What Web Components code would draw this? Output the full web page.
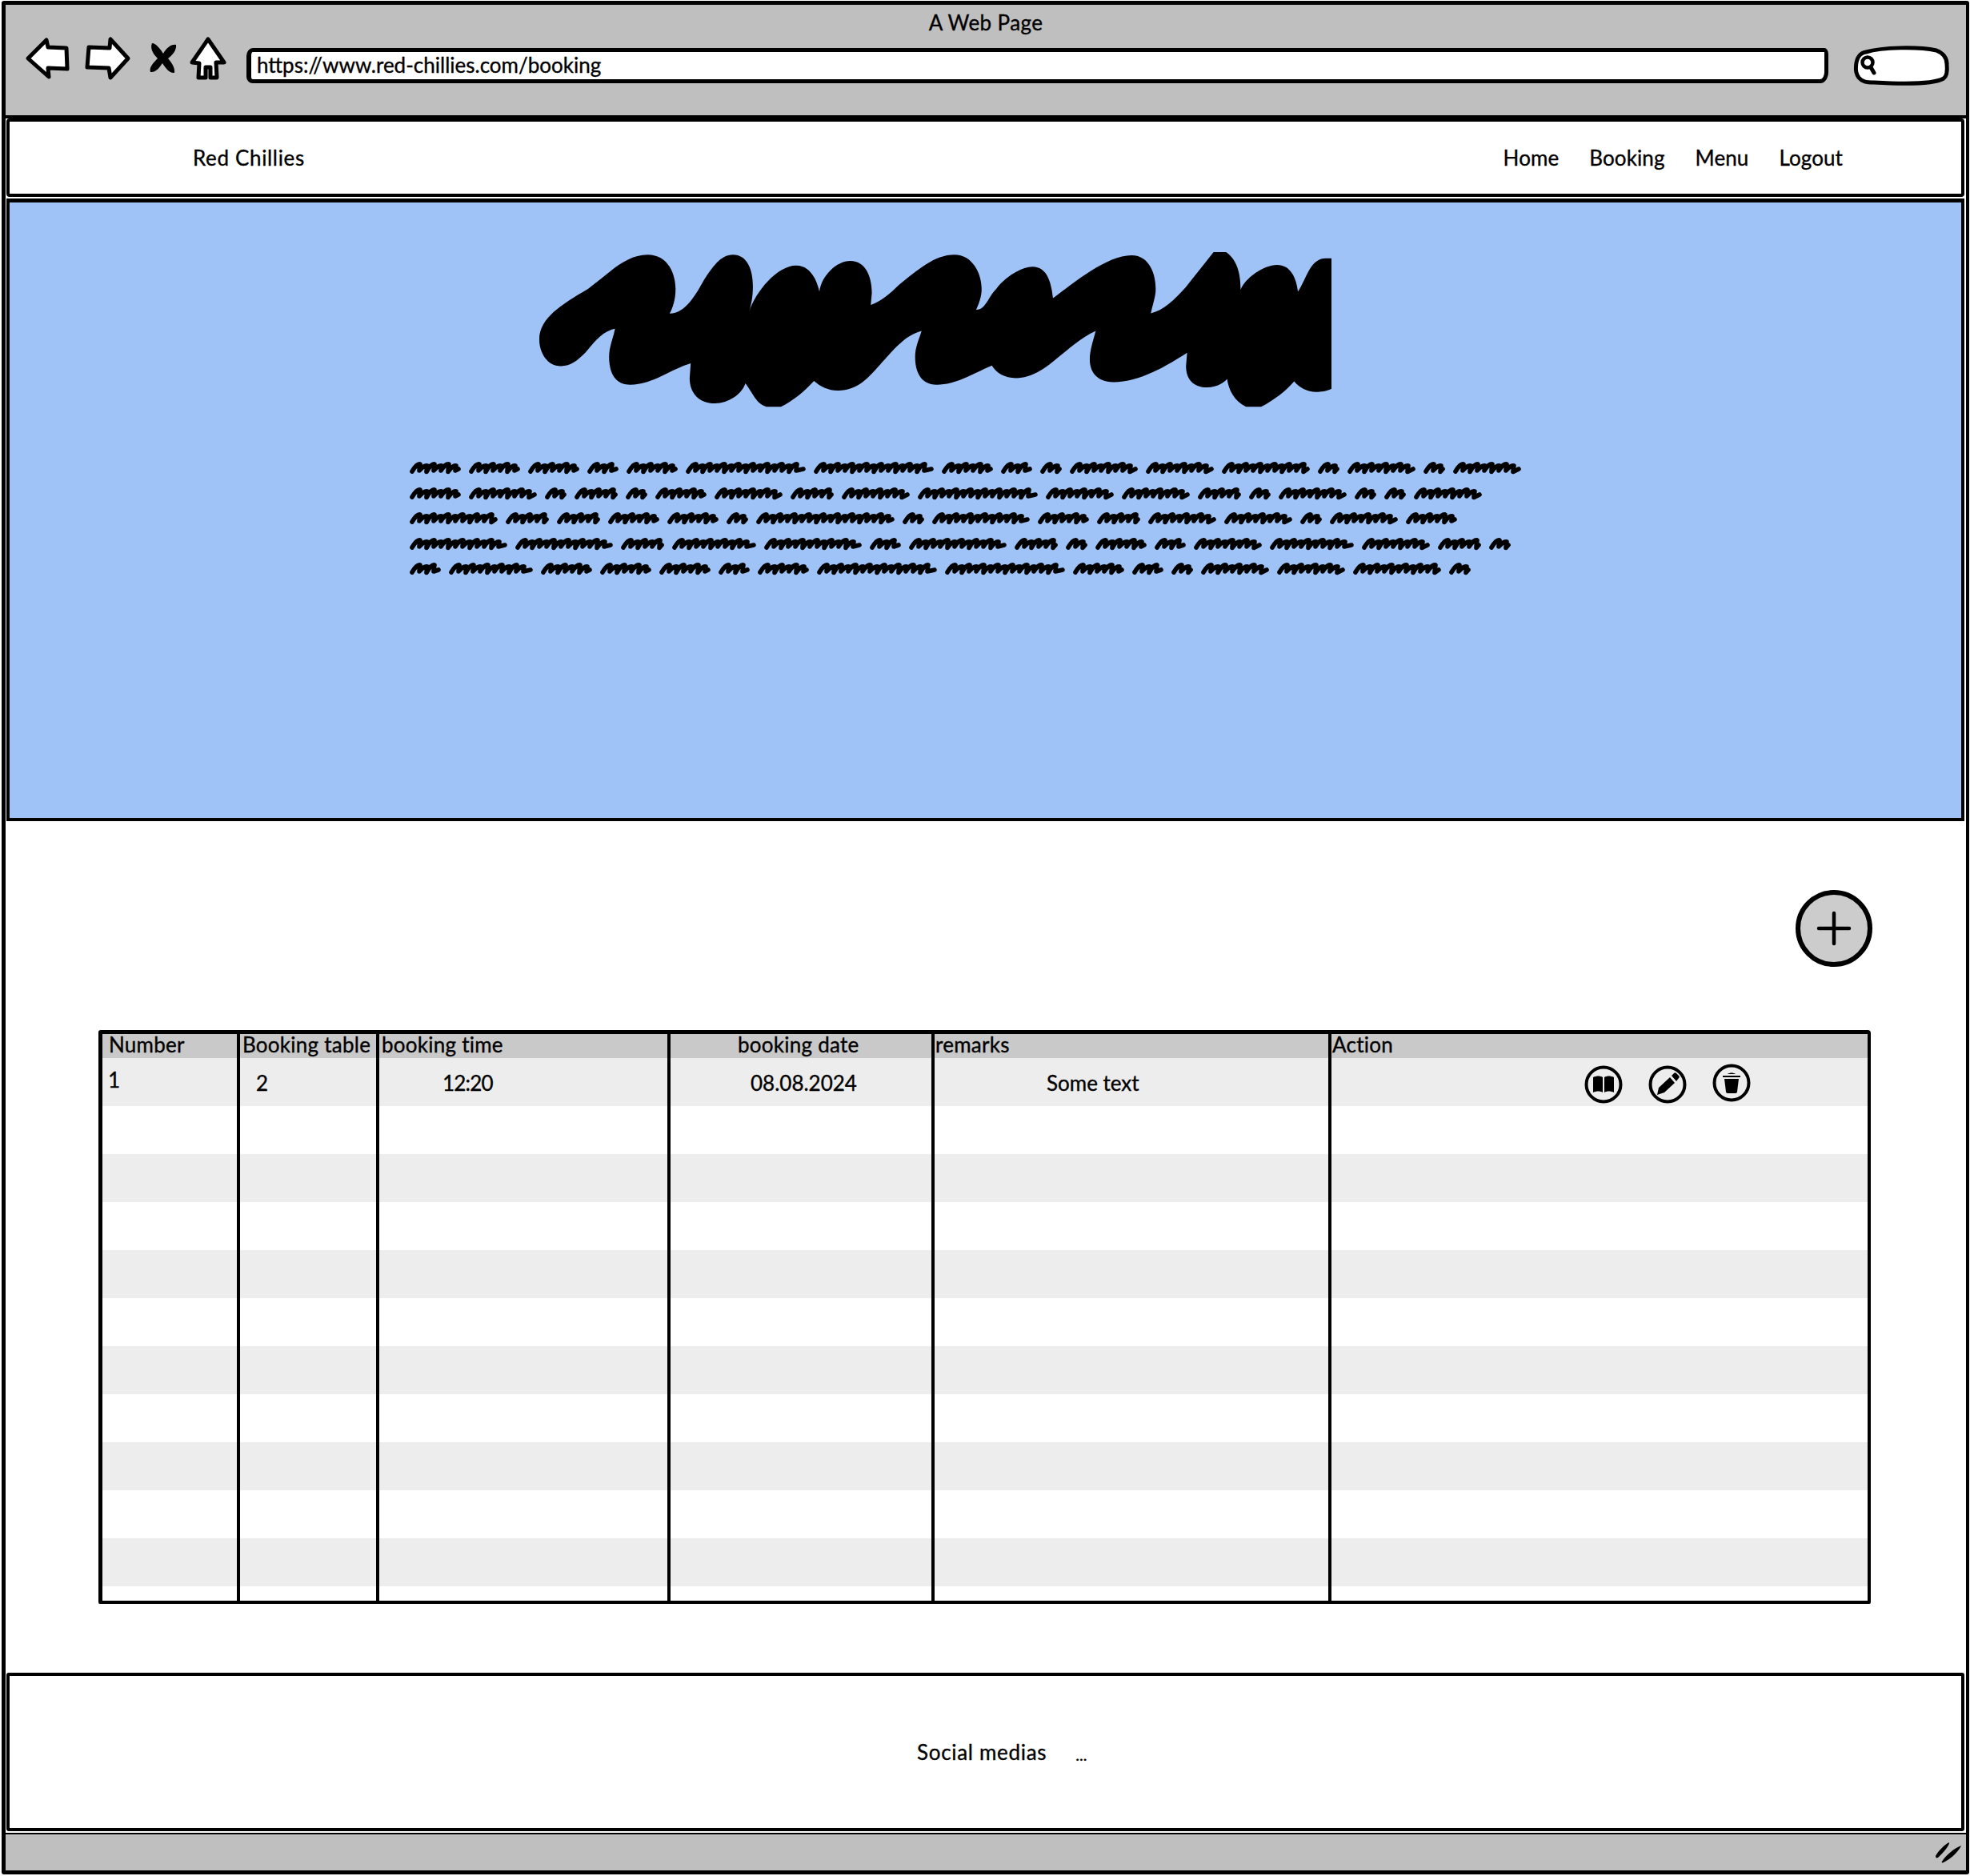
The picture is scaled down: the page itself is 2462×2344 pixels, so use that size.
<!DOCTYPE html>
<html lang="en">
<head>
    <meta charset="UTF-8">
    <title>Red Chillies booking wireframe</title>
    <style>
        html, body { margin: 0; background: #fff; }
        body { font-family: Lato, "Open Sans", sans-serif; color: #000; -webkit-text-stroke: 0.35px #000; }
    </style>
</head>
<body>
    <browser-window>
        <browser-bar title="A Web Page" url="https://www.red-chillies.com/booking"></browser-bar>
        <site-nav brand="Red Chillies">
            <span>Home</span>
            <span>Booking</span>
            <span>Menu</span>
            <span>Logout</span>
        </site-nav>
        <hero-banner>
            <scribble-line widths="64 64 64 39 64 150 150 64 39 27 85 85 110 27 85 27 85"></scribble-line>
            <scribble-line widths="64 85 27 54 27 64 85 54 85 150 85 85 54 27 85 27 27 85"></scribble-line>
            <scribble-line widths="110 54 54 64 64 27 173 27 122 64 54 85 85 27 85 64"></scribble-line>
            <scribble-line widths="122 122 54 105 122 39 122 54 27 64 39 85 105 85 54 27"></scribble-line>
            <scribble-line widths="39 105 64 64 64 39 64 150 150 64 39 27 85 85 110 27"></scribble-line>
        </hero-banner>
        <page-content>
            <add-button></add-button>
            <booking-table>
                <sketch-icon slot="actions" name="book"></sketch-icon>
                <sketch-icon slot="actions" name="pencil"></sketch-icon>
                <sketch-icon slot="actions" name="trash"></sketch-icon>
            </booking-table>
        </page-content>
        <page-footer></page-footer>
        <status-bar></status-bar>
    </browser-window>

    <script>
        // Browser chrome around the whole page
        class BrowserWindow extends HTMLElement {
            constructor() {
                super();
                this.attachShadow({ mode: 'open' });
                this.shadowRoot.innerHTML = `
                    <style>
                        :host {
                            display: flex;
                            flex-direction: column;
                            box-sizing: border-box;
                            width: 2459px;
                            height: 2341px;
                            margin: 1px 0 0 2px;
                            border: 5px solid #000;
                            border-right-width: 4px;
                            border-radius: 3px;
                            background: #fff;
                        }
                    </style>
                    <slot></slot>
                `;
            }
        }

        class BrowserBar extends HTMLElement {
            constructor() {
                super();
                this.attachShadow({ mode: 'open' });
                this.shadowRoot.innerHTML = `
                    <style>
                        :host {
                            display: block;
                            box-sizing: border-box;
                            height: 142px;
                            padding-top: 2px;
                            background: #bfbfbf;
                            border-bottom: 4px solid #000;
                        }
                        .title { height: 40px; line-height: 40px; text-align: center; font-size: 26px; letter-spacing: 0.4px; }
                        .tools { display: flex; align-items: center; height: 50px; padding-left: 25px; }
                        svg { display: block; flex: none; overflow: visible; }
                        .url {
                            box-sizing: border-box;
                            width: 1977px;
                            height: 44px;
                            margin: 18px 0 0 25px;
                            padding-left: 7px;
                            line-height: 33px;
                            font-size: 26px;
                            background: #fff;
                            border: 5px solid #000;
                            border-left-width: 6px;
                            border-radius: 8px 5px 10px 8px / 10px 8px 14px 8px;
                        }
                        .search { position: relative; width: 118px; height: 48px; margin: 18px 0 0 32px; }
                    </style>
                    <div class="title"></div>
                    <div class="tools">
                        <svg width="55" height="52" viewBox="0 0 55 52" style="margin-top:-1px"><path d="M3 26 26 3l2 9 23 1 1 26-24-1 1 11Z" fill="#fff" stroke="#000" stroke-width="5" stroke-linejoin="round"/></svg>
                        <svg width="57" height="54" viewBox="0 0 57 54" style="margin-left:19px"><path d="M54 27 32 3l-1 11-26-1-2 25 27 1 2 12Z" fill="#fff" stroke="#000" stroke-width="5" stroke-linejoin="round"/></svg>
                        <svg width="33" height="38" viewBox="0 0 33 38" style="margin-left:24px"><path d="M3 0C8 0 14 8 17 13 21 6 27 1 33 2 34 9 28 15 23 19 28 25 32 31 31 37 25 38 20 31 16 25 12 31 7 37 1 36-1 30 5 24 10 19 5 14 0 7 3 0Z"/></svg>
                        <svg width="46" height="54" viewBox="0 0 46 54" style="margin-left:17px"><path d="M23 3 43 32H33L34 51H26V38H20V51H11L12 33 3 32Z" fill="#fff" stroke="#000" stroke-width="5" stroke-linejoin="round"/></svg>
                        <div class="url"></div>
                        <div class="search">
                            <svg width="118" height="48" viewBox="0 0 118 48">
                                <path d="M2.5 25C3 14 8 8 15 7C35 1 80 0 103 5C113 9 116 15 116 22C117 32 115 38 112 40C100 47 60 47 25 45C15 45 10 44 6 39C3 35 2 30 2.5 25Z" fill="#fff" stroke="#000" stroke-width="5"/>
                                <circle cx="17" cy="20" r="6.5" fill="none" stroke="#000" stroke-width="4.5"/>
                                <path d="M21 26 25 33" stroke="#000" stroke-width="5" stroke-linecap="round"/>
                            </svg>
                        </div>
                    </div>
                `;
            }

            connectedCallback() {
                this.shadowRoot.querySelector('.title').textContent = this.getAttribute('title');
                this.shadowRoot.querySelector('.url').textContent = this.getAttribute('url');
            }
        }

        class SiteNav extends HTMLElement {
            constructor() {
                super();
                this.attachShadow({ mode: 'open' });
                this.shadowRoot.innerHTML = `
                    <style>
                        :host {
                            display: flex;
                            align-items: center;
                            box-sizing: border-box;
                            height: 98px;
                            margin: 0 2px 0 1px;
                            padding: 0 148px 0 229px;
                            border: 4px solid #000;
                            border-radius: 4px;
                            background: #fff;
                            font-size: 26px;
                        }
                        .brand { flex: 1; letter-spacing: 0.65px; }
                        nav { display: flex; gap: 38px; letter-spacing: 0.1px; }
                    </style>
                    <div class="brand"></div>
                    <nav><slot></slot></nav>
                `;
            }

            connectedCallback() {
                this.shadowRoot.querySelector('.brand').textContent = this.getAttribute('brand');
            }
        }

        class HeroBanner extends HTMLElement {
            constructor() {
                super();
                this.attachShadow({ mode: 'open' });
                this.shadowRoot.innerHTML = `
                    <style>
                        :host {
                            display: block;
                            box-sizing: border-box;
                            height: 778px;
                            margin: 2px 2px 0 1px;
                            padding-top: 62px;
                            border: 4px solid #000;
                            border-top-width: 5px;
                            background: #9fc3f7;
                        }
                        svg { display: block; margin-left: 662px; }
                        .lines { display: flex; flex-direction: column; gap: 15.6px; margin: 68px 0 0 500px; }
                    </style>
                    <svg width="990" height="194" viewBox="50 72 1465 583" preserveAspectRatio="none">
                        <path d="M50 400C50 320 90 270 140 210C180 150 210 82 250 82C290 82 302 160 302 210C302 250 297 280 291 303C320 303 340 230 355 175C370 130 385 82 408 82C435 82 445 140 445 200C445 240 442 270 438 295C450 220 490 122 525 122C550 122 562 170 568 220C572 160 600 105 625 105C655 105 665 170 665 225L663 270C680 260 700 225 715 195C750 140 780 82 818 82C850 82 868 150 868 210C868 240 863 265 858 288C875 290 880 240 895 210C910 170 940 127 962 127C990 127 997 190 1000 245C1040 185 1100 84 1145 84C1180 84 1190 160 1190 210C1190 240 1184 270 1181 302C1205 290 1225 250 1245 205L1297 72L1320 72C1340 100 1347 150 1347 213C1355 170 1390 120 1414 120C1440 120 1450 170 1453 220C1470 170 1475 95 1505 95L1515 95L1515 585C1505 595 1495 597 1487 597C1470 597 1455 580 1446 557C1430 595 1410 625 1385 653L1357 653C1335 630 1325 590 1322 548C1315 565 1300 580 1285 580C1260 580 1246 550 1246 500L1248 450C1210 500 1160 560 1112 560C1080 560 1068 520 1068 475C1068 440 1075 400 1079 368C1050 395 1030 435 1005 475C985 510 960 545 932 545C910 545 895 525 887 498C850 530 820 570 785 570C755 570 745 520 745 465C745 430 752 400 757 368C725 385 705 440 680 495C660 540 640 592 602 592C585 592 570 578 558 556C540 595 520 630 497 653L470 653C450 640 445 600 431 565C425 605 400 640 375 640C345 640 328 600 328 545L330 490C295 510 260 570 218 570C190 570 179 525 179 465C179 425 187 395 190 360C165 370 150 415 135 450C120 480 108 500 90 500C65 500 50 450 50 400Z"/>
                    </svg>
                    <div class="lines"><slot></slot></div>
                `;
            }
        }

        // One row of squiggled-out text, word widths come from the attribute
        class ScribbleLine extends HTMLElement {
            constructor() {
                super();
                this.attachShadow({ mode: 'open' });
            }

            connectedCallback() {
                const words = this.getAttribute('widths').split(' ').map(Number);
                const svgs = words.map((w) => {
                    // slanted loops, a bit deeper in the middle of the word
                    let d = 'M3 12';
                    let i = 0;
                    for (let x = 3; x < w - 14; x += 9) {
                        const top = i % 2 ? 5 : 3;
                        const low = i % 3 === 1 ? 12.5 : 11;
                        d += ` Q${x + 6} ${top - 1} ${x + 10} ${top} Q${x + 9} ${low - 3} ${x + 9} ${low}`;
                        i++;
                    }
                    return `<svg width="${w}" height="16" viewBox="0 0 ${w} 16"><path d="${d} L${w - 3} 9" fill="none" stroke="#000" stroke-width="5.6" stroke-linecap="round" stroke-linejoin="round"/></svg>`;
                });
                this.shadowRoot.innerHTML = `
                    <style>
                        :host { display: flex; gap: 10px; height: 16px; }
                        svg { display: block; flex: none; }
                    </style>
                    ${svgs.join('')}
                `;
            }
        }

        class PageContent extends HTMLElement {
            constructor() {
                super();
                this.attachShadow({ mode: 'open' });
                this.shadowRoot.innerHTML = `
                    <style>
                        :host {
                            display: flex;
                            flex-direction: column;
                            gap: 79px;
                            padding: 86px 117px 86px 116px;
                        }
                    </style>
                    <slot></slot>
                `;
            }
        }

        class AddButton extends HTMLElement {
            constructor() {
                super();
                this.attachShadow({ mode: 'open' });
                this.shadowRoot.innerHTML = `
                    <style>
                        :host { display: block; align-self: flex-end; width: 96px; height: 96px; }
                        svg { display: block; }
                    </style>
                    <svg width="96" height="96" viewBox="0 0 96 96">
                        <circle cx="48" cy="48" r="45" fill="#ccc" stroke="#000" stroke-width="6"/>
                        <path d="M48 29V67M29 48H67" stroke="#000" stroke-width="4.5" stroke-linecap="round"/>
                    </svg>
                `;
            }
        }

        class SketchIcon extends HTMLElement {
            constructor() {
                super();
                this.attachShadow({ mode: 'open' });
            }

            connectedCallback() {
                const glyphs = {
                    book: '<path d="M11 15C15 13 20 13 23 15V34C20 32 15 32 11 34ZM25 15C28 13 33 13 37 15V34C33 32 28 32 25 34Z"/>',
                    pencil: '<path d="M11 37 13 28 27 15 33 22 20 34ZM29 13 32 10C33 9 34 9 35 10L38 13C39 14 39 15 38 16L35 20Z"/>',
                    trash: '<path d="M13 15H35V17H13ZM19 13C22 11 26 11 29 13ZM15 19H33L31 35C31 36 30 37 29 37H19C18 37 17 36 17 35Z"/>'
                };
                this.shadowRoot.innerHTML = `
                    <style>
                        :host { display: block; width: 48px; height: 48px; }
                        svg { display: block; }
                    </style>
                    <svg width="48" height="48" viewBox="0 0 48 48">
                        <circle cx="24" cy="24" r="21.5" fill="none" stroke="#000" stroke-width="4"/>
                        ${glyphs[this.getAttribute('name')]}
                    </svg>
                `;
            }
        }

        class BookingTable extends HTMLElement {
            constructor() {
                super();
                this.attachShadow({ mode: 'open' });

                const headers = [
                    ['Number', 8], ['Booking table', 3], ['booking time', 3],
                    ['booking date', 84], ['remarks', 1], ['Action', 1]
                ];
                const first = [['1', 7], ['2', 20], ['12:20', 79], ['08.08.2024', 100], ['Some text', 140]];

                let rows = '<div class="row head">' + headers.map(([t, pad]) =>
                    `<div class="cell" style="padding-left:${pad}px">${t}</div>`).join('') + '</div>';
                rows += '<div class="row odd">' + first.map(([t, pad], i) =>
                    `<div class="cell${i === 0 ? ' up' : ''}${i === 2 ? ' tight' : ''}" style="padding-left:${pad}px">${t}</div>`).join('') +
                    '<div class="cell actions"><slot name="actions"></slot></div></div>';
                for (let i = 1; i < 11; i++) {
                    rows += `<div class="row ${i % 2 ? 'even' : 'odd'}">` + '<div class="cell"></div>'.repeat(6) + '</div>';
                }
                rows += '<div class="row end">' + '<div class="cell"></div>'.repeat(6) + '</div>';

                this.shadowRoot.innerHTML = `
                    <style>
                        :host {
                            display: block;
                            box-sizing: border-box;
                            width: 2215px;
                            border: 5px solid #000;
                            border-width: 5px 4px 4px 5px;
                            border-radius: 3px 4px 2px 2px;
                            font-size: 26px;
                            line-height: 24px;
                        }
                        .row { display: grid; grid-template-columns: 168px 174px 364px 330px 496px 1fr; height: 60px; }
                        .head { height: 30px; background: #c9c9c9; letter-spacing: 0.25px; }
                        .odd { background: #ededed; }
                        .even, .end { background: #fff; }
                        .end { height: 18px; }
                        .end .cell + .cell { height: 22px; }
                        .cell { display: flex; align-items: center; box-sizing: border-box; min-width: 0; white-space: nowrap; padding-top: 2px; }
                        .head .cell { padding-top: 0; padding-bottom: 4px; }
                        .cell + .cell { border-left: 4px solid #000; }
                        .up { padding-top: 0; padding-bottom: 6px; }
                        .tight { letter-spacing: -0.8px; }
                        .actions { gap: 32px; padding: 6px 0 0 316px; }
                        ::slotted(sketch-icon:last-child) { margin-bottom: 4px; }
                    </style>
                    ${rows}
                `;
            }
        }

        class PageFooter extends HTMLElement {
            constructor() {
                super();
                this.attachShadow({ mode: 'open' });
                this.shadowRoot.innerHTML = `
                    <style>
                        :host {
                            display: flex;
                            align-items: center;
                            gap: 36px;
                            box-sizing: border-box;
                            height: 198px;
                            margin: 0 2px 0 1px;
                            padding-left: 1134px;
                            border: 4px solid #000;
                            border-radius: 3px;
                            background: #fff;
                            font-size: 26px;
                            letter-spacing: 0.7px;
                        }
                        .dots { font-size: 20px; letter-spacing: 0; padding-top: 6px; }
                    </style>
                    <span>Social medias</span><span class="dots">...</span>
                `;
            }
        }

        class StatusBar extends HTMLElement {
            constructor() {
                super();
                this.attachShadow({ mode: 'open' });
                this.shadowRoot.innerHTML = `
                    <style>
                        :host {
                            display: flex;
                            flex: 1;
                            align-items: center;
                            justify-content: flex-end;
                            margin-top: 2px;
                            padding-right: 6px;
                            border-top: 2px solid #000;
                            background: #bfbfbf;
                        }
                        svg { display: block; }
                    </style>
                    <svg width="32" height="26" viewBox="0 0 32 26">
                        <path d="M0 17C3 11 11 3 17 0 18 3 9 14 3 19 1 20 0 19 0 17ZM8 24C12 17 22 8 32 4 30 9 21 20 10 25 8 26 7 25 8 24Z"/>
                    </svg>
                `;
            }
        }

        customElements.define('browser-window', BrowserWindow);
        customElements.define('browser-bar', BrowserBar);
        customElements.define('site-nav', SiteNav);
        customElements.define('hero-banner', HeroBanner);
        customElements.define('scribble-line', ScribbleLine);
        customElements.define('page-content', PageContent);
        customElements.define('add-button', AddButton);
        customElements.define('sketch-icon', SketchIcon);
        customElements.define('booking-table', BookingTable);
        customElements.define('page-footer', PageFooter);
        customElements.define('status-bar', StatusBar);
    </script>
</body>
</html>
